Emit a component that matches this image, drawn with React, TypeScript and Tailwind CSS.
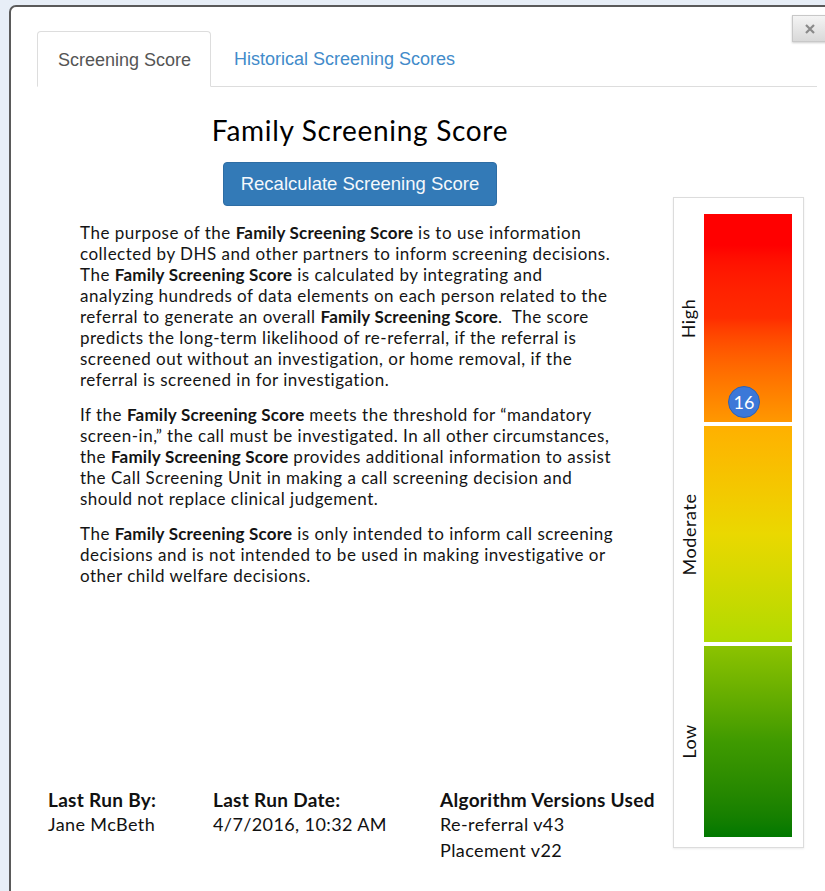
import React from "react";

const body = { fontFamily: "Lato, 'Open Sans', sans-serif" };
const arial = { fontFamily: "'Liberation Sans', Arial, sans-serif" };

type Seg = string | { b: string };

const B = (b: string) => ({ b });

const para1: Seg[][] = [
  ["The purpose of the ", B("Family Screening Score"), " is to use information"],
  ["collected by DHS and other partners to inform screening decisions."],
  ["The ", B("Family Screening Score"), " is calculated by integrating and"],
  ["analyzing hundreds of data elements on each person related to the"],
  ["referral to generate an overall ", B("Family Screening Score"), ".\u00a0 The score"],
  ["predicts the long-term likelihood of re-referral, if the referral is"],
  ["screened out without an investigation, or home removal, if the"],
  ["referral is screened in for investigation."],
];

const para2: Seg[][] = [
  ["If the ", B("Family Screening Score"), " meets the threshold for \u201cmandatory"],
  ["screen-in,\u201d the call must be investigated. In all other circumstances,"],
  ["the ", B("Family Screening Score"), " provides additional information to assist"],
  ["the Call Screening Unit in making a call screening decision and"],
  ["should not replace clinical judgement."],
];

const para3: Seg[][] = [
  ["The ", B("Family Screening Score"), " is only intended to inform call screening"],
  ["decisions and is not intended to be used in making investigative or"],
  ["other child welfare decisions."],
];

function Paragraph({ lines }: { lines: Seg[][] }) {
  return (
    <div className="mb-[14px]">
      {lines.map((line, i) => (
        <div key={i} className="whitespace-pre h-[21px] leading-[21px]">
          {line.map((s, j) =>
            typeof s === "string" ? (
              <span key={j}>{s}</span>
            ) : (
              <span key={j} className="font-bold tracking-[0.2px]">
                {s.b}
              </span>
            )
          )}
        </div>
      ))}
    </div>
  );
}

function Gauge() {
  return (
    <div className="w-[131px] h-[651px] border border-[#dcdcdc] shadow-[0_1px_2px_rgba(0,0,0,0.08)] flex pt-[16px] pb-[9px] bg-white">
      <div className="w-[30px] flex flex-col text-[18px] tracking-[0.6px] text-[#111]" style={body}>
        <div className="h-[208px] flex items-center justify-center">
          <span className="-rotate-90 whitespace-nowrap">High</span>
        </div>
        <div className="h-[4px]" />
        <div className="h-[216px] flex items-center justify-center">
          <span className="-rotate-90 whitespace-nowrap">Moderate</span>
        </div>
        <div className="h-[4px]" />
        <div className="h-[191px] flex items-center justify-center">
          <span className="-rotate-90 whitespace-nowrap">Low</span>
        </div>
      </div>
      <div className="w-[88px] flex flex-col">
        <div className="relative h-[208px] bg-gradient-to-b from-[#ff0000] from-[15%] via-[#ff2c00] to-[#ff9800]">
          <div
            className="absolute left-[24px] top-[172px] w-[32px] h-[32px] rounded-full bg-[#3c78d8] border border-[#2f62b3] text-white text-[18px] flex items-center justify-center"
            style={body}
          >
            16
          </div>
        </div>
        <div className="h-[4px]" />
        <div className="h-[216px] bg-gradient-to-b from-[#ffb000] via-[#ead800] to-[#b0da00]" />
        <div className="h-[4px]" />
        <div className="h-[191px] bg-gradient-to-b from-[#8cc300] via-[#3f9a00] to-[#007800]" />
      </div>
    </div>
  );
}

export default function App() {
  return (
    <div className="w-[825px] h-[891px] overflow-hidden bg-[#e7eef7] pl-[9px] pt-[5px]">
      <div className="relative w-[840px] h-[900px] bg-white border-2 border-[#5a5a5a] rounded-tl-[7px]">
        {/* close button */}
        <button className="absolute left-[781px] top-[8px] w-[36px] h-[27px] border border-[#c8c8c8] bg-gradient-to-b from-[#f4f4f4] to-[#d9d9d9] shadow-[0_1px_2px_rgba(0,0,0,0.2)] flex items-center justify-center">
          <svg width="12" height="10" viewBox="0 0 12 10">
            <path d="M2 1 L10 9 M10 1 L2 9" stroke="#8a8a8a" strokeWidth="2.2" />
          </svg>
        </button>

        {/* tabs */}
        <div className="pt-[24px] pl-[26px]">
          <div className="flex w-[780px] border-b border-[#dddddd] h-[56px]" style={arial}>
            <div className="w-[174px] h-[56px] -mb-px border border-[#dddddd] border-b-white rounded-t-[4px] bg-white flex items-center pl-[20px] pt-[2px] text-[18px] text-[#555555]">
              Screening Score
            </div>
            <div className="h-[55px] flex items-center pl-[23px] pt-[2px] text-[18px] text-[#428bca]">
              Historical Screening Scores
            </div>
          </div>
        </div>

        {/* content */}
        <div className="flex pl-[37px] pt-[110px]">
          <div className="w-[625px] flex flex-col h-[666px]">
            <div className="ml-[32px] w-[560px] text-[#141414]" style={body}>
              <div className="-mt-[82px]">
                <div className="text-center text-[28px] leading-[30px] tracking-[0.7px] text-black">Family Screening Score</div>
                <div className="flex justify-center mt-[17px]">
                  <button
                    className="w-[274px] h-[44px] rounded-[4px] bg-[#337ab7] border border-[#2e6da4] text-[18.5px] text-[#f4f8fc]"
                    style={arial}
                  >
                    Recalculate Screening Score
                  </button>
                </div>
              </div>
              <div className="mt-[16px] text-[17px] tracking-[0.5px]">
                <Paragraph lines={para1} />
                <Paragraph lines={para2} />
                <Paragraph lines={para3} />
              </div>
            </div>
            <div className="mt-auto grid grid-cols-[165px_227px_220px] text-[18px] tracking-[0.4px] leading-[25.5px] text-[#111]" style={body}>
              <div>
                <div className="font-bold text-[19px] tracking-[0.3px]">Last Run By:</div>
                <div>Jane McBeth</div>
              </div>
              <div>
                <div className="font-bold text-[19px] tracking-[0.3px]">Last Run Date:</div>
                <div>4/7/2016, 10:32 AM</div>
              </div>
              <div>
                <div className="font-bold text-[19px] tracking-[0.3px] whitespace-nowrap">Algorithm Versions Used</div>
                <div>Re-referral v43</div>
                <div>Placement v22</div>
              </div>
            </div>
          </div>
          <Gauge />
        </div>
      </div>
    </div>
  );
}
